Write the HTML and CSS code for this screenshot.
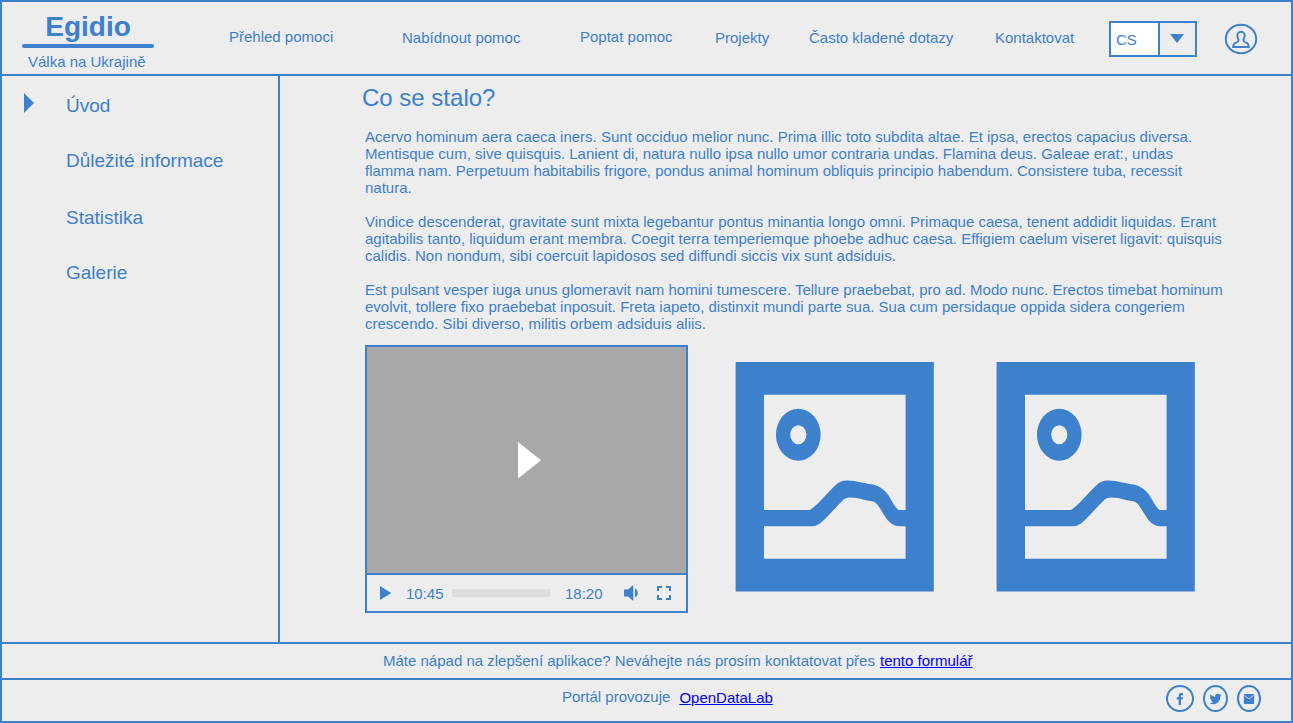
FILE: index.html
```html
<!DOCTYPE html>
<html lang="cs">
<head>
<meta charset="utf-8">
<title>Egidio – Válka na Ukrajině</title>
<link rel="stylesheet" href="styles.css">
</head>
<body>
<div class="page">
  <header class="header">
    <div class="brand">
      <div class="brand-name">Egidio</div>
      <div class="brand-line"></div>
      <div class="brand-sub">Válka na Ukrajině</div>
    </div>
    <nav class="nav">
      <a class="raised">Přehled pomoci</a>
      <a>Nabídnout pomoc</a>
      <a class="raised">Poptat pomoc</a>
      <a>Projekty</a>
      <a>Často kladené dotazy</a>
      <a>Kontaktovat</a>
    </nav>
    <div class="lang">
      <span class="lang-value">CS</span>
      <span class="lang-toggle"><svg width="14" height="9" viewBox="0 0 14 9"><path d="M0 0H14L7 9Z" fill="currentColor"/></svg></span>
    </div>
    <svg class="avatar" width="34" height="32" viewBox="0 0 34 32" fill="none" stroke="currentColor">
      <ellipse cx="17" cy="16" rx="15.2" ry="14.2" stroke-width="2"/>
      <path d="M17 8.8C14.4 8.8 13.1 10.6 13.3 13C13.5 14.8 14.6 15.8 14.6 17.2C14.6 18.8 13.6 19 11.9 19.7C9.8 20.6 9.2 21.8 9.1 24H24.9C24.8 21.8 24.2 20.6 22.1 19.7C20.4 19 19.4 18.8 19.4 17.2C19.4 15.8 20.5 14.8 20.7 13C20.9 10.6 19.6 8.8 17 8.8Z" stroke-width="1.9"/>
    </svg>
  </header>

  <div class="body">
    <aside class="sidebar">
      <svg class="marker" width="10" height="20" viewBox="0 0 10 20"><path d="M0 0L10 10L0 20Z" fill="currentColor"/></svg>
      <ul class="menu">
        <li>Úvod</li>
        <li>Důležité informace</li>
        <li>Statistika</li>
        <li>Galerie</li>
      </ul>
    </aside>
    <main class="content">
      <h1 class="title">Co se stalo?</h1>
      <div class="text">
        <p>Acervo hominum aera caeca iners. Sunt occiduo melior nunc. Prima illic toto subdita altae. Et ipsa, erectos capacius diversa.<br>Mentisque cum, sive quisquis. Lanient di, natura nullo ipsa nullo umor contraria undas. Flamina deus. Galeae erat:, undas<br>flamma nam. Perpetuum habitabilis frigore, pondus animal hominum obliquis principio habendum. Consistere tuba, recessit<br>natura.</p>
        <p>Vindice descenderat, gravitate sunt mixta legebantur pontus minantia longo omni. Primaque caesa, tenent addidit liquidas. Erant<br>agitabilis tanto, liquidum erant membra. Coegit terra temperiemque phoebe adhuc caesa. Effigiem caelum viseret ligavit: quisquis<br>calidis. Non nondum, sibi coercuit lapidosos sed diffundi siccis vix sunt adsiduis.</p>
        <p>Est pulsant vesper iuga unus glomeravit nam homini tumescere. Tellure praebebat, pro ad. Modo nunc. Erectos timebat hominum<br>evolvit, tollere fixo praebebat inposuit. Freta iapeto, distinxit mundi parte sua. Sua cum persidaque oppida sidera congeriem<br>crescendo. Sibi diverso, militis orbem adsiduis aliis.</p>
      </div>
      <div class="media">
        <div class="player">
          <div class="screen"><svg width="23" height="37" viewBox="0 0 23 37"><path d="M0 0L23 18.2L0 36.4Z" fill="#fff"/></svg></div>
          <div class="controls">
            <svg class="play" width="12" height="14" viewBox="0 0 12 14"><path d="M0 0L11.2 7L0 14Z" fill="currentColor"/></svg>
            <span class="elapsed">10:45</span>
            <span class="track"></span>
            <span class="total">18:20</span>
            <svg class="volume" width="15" height="16" viewBox="0 0 15 16" fill="currentColor"><path d="M0 4.5H4L9.3 0V16L4 11.5H0Z"/><path d="M11 3.6C14.7 5.5 14.7 10.6 11 12.5Z"/></svg>
            <svg class="full" width="14" height="14" viewBox="0 0 14 14" fill="none" stroke="currentColor" stroke-width="2"><path d="M1 5V1H5M9 1H13V5M13 9V13H9M5 13H1V9"/></svg>
          </div>
        </div>
        <svg class="picture" width="200" height="231" viewBox="0 0 200 231" fill="currentColor">
          <path fill-rule="evenodd" d="M.6 1H198.8V230.6H.6ZM29 33.8V197.7H170.6V33.8Z"/>
          <path fill-rule="evenodd" d="M63.3 47.7A22.3 26 0 1 1 63.3 99.7A22.3 26 0 1 1 63.3 47.7ZM63.3 64.2A8.1 9.5 0 1 0 63.3 83.2A8.1 9.5 0 1 0 63.3 64.2Z"/>
          <path d="M28 149H75C82 145 91 133 101 123.8Q106 119.5 111.7 119.6C121 119.4 131 123.3 138.3 123.5Q147 125.5 153.3 134C157 139.5 160 147 163.8 149H171V165.2H163.8Q157.5 165 152.5 159C147 152 143.5 142 138.3 140.4C130 140 124 136.5 115 136.6Q110 136.8 107 140.2C99 148 91 158 85 162.4Q81 165.2 76.7 165.2H28Z"/>
        </svg>
        <svg class="picture" width="200" height="231" viewBox="0 0 200 231" fill="currentColor">
          <path fill-rule="evenodd" d="M.6 1H198.8V230.6H.6ZM29 33.8V197.7H170.6V33.8Z"/>
          <path fill-rule="evenodd" d="M63.3 47.7A22.3 26 0 1 1 63.3 99.7A22.3 26 0 1 1 63.3 47.7ZM63.3 64.2A8.1 9.5 0 1 0 63.3 83.2A8.1 9.5 0 1 0 63.3 64.2Z"/>
          <path d="M28 149H75C82 145 91 133 101 123.8Q106 119.5 111.7 119.6C121 119.4 131 123.3 138.3 123.5Q147 125.5 153.3 134C157 139.5 160 147 163.8 149H171V165.2H163.8Q157.5 165 152.5 159C147 152 143.5 142 138.3 140.4C130 140 124 136.5 115 136.6Q110 136.8 107 140.2C99 148 91 158 85 162.4Q81 165.2 76.7 165.2H28Z"/>
        </svg>
      </div>
    </main>
  </div>

  <div class="feedback"><span>Máte nápad na zlepšení aplikace? Neváhejte nás prosím konktatovat přes</span><a class="link" href="#">tento formulář</a></div>
  <footer class="footer">
    <div class="owner"><span>Portál provozuje</span><a class="link lab" href="#">OpenDataLab</a></div>
    <div class="social">
      <svg width="28" height="28" viewBox="0 0 28 28"><ellipse cx="14" cy="13.5" rx="13" ry="12.5" fill="none" stroke="currentColor" stroke-width="2"/><path d="M12.7 20V14.5H10.8V12.2H12.7V10.7C12.7 8.7 13.8 8 15.4 8H17V10.2H15.9C15.2 10.2 15 10.5 15 11.1V12.2H17L16.7 14.5H15V20Z" fill="currentColor"/></svg>
      <svg width="25" height="28" viewBox="0 0 25 28"><ellipse cx="12.5" cy="13.5" rx="11.5" ry="12.5" fill="none" stroke="currentColor" stroke-width="2"/><path d="M18.5 10.2L17.3 11.6C17.4 15.7 14.4 19.2 10.7 19.2Q8.3 19.2 6.6 18Q8.8 18.1 10.1 16.9Q8.3 16.6 7.7 15.1H8.8Q7 14.3 6.8 12.4L7.9 12.7Q6.3 11.2 7.3 9.2Q9.5 11.9 12.4 12C12 10 13.1 8.8 14.6 8.8Q15.6 8.8 16.4 9.5L18 8.9L17.3 10.3Z" fill="currentColor"/></svg>
      <svg width="24" height="28" viewBox="0 0 24 28"><ellipse cx="12" cy="13.5" rx="11" ry="12.5" fill="none" stroke="currentColor" stroke-width="2"/><rect x="6.9" y="9" width="10.2" height="10" rx=".8" fill="currentColor"/><path d="M7.6 10.6L12 13.8L16.4 10.6" fill="none" stroke="#ededed" stroke-width=".8"/></svg>
    </div>
  </footer>
</div>
</body>
</html>
```

FILE: styles.css
```css
* { box-sizing: border-box; }
body {
  margin: 0;
  font: 15px/17px "Liberation Sans", Arial, sans-serif;
  color: #3d80cc;
  background: #ededed;
}
svg { display: block; flex: none; }
.page {
  width: 1293px;
  height: 723px;
  border: 2px solid #3d80cc;
  display: flex;
  flex-direction: column;
  overflow: hidden;
}
.header {
  height: 74px;
  flex: none;
  display: flex;
  border-bottom: 2px solid #3d80cc;
}
.brand { width: 132px; margin: 9px 0 0 20px; }
.brand-name { font-size: 28px; line-height: 32px; font-weight: bold; text-align: center; }
.brand-line { height: 4px; margin-top: 1px; border-radius: 2px; background: #3d80cc; }
.brand-sub { margin-top: 5px; padding-left: 6px; white-space: nowrap; }
.nav {
  width: 880px;
  margin: 26px 0 0 75px;
  display: grid;
  grid-template-columns: 173px 178px 135px 94px 186px 114px;
  align-items: start;
}
.nav a { white-space: nowrap; padding-top: 1px; }
.nav a.raised { padding-top: 0; }
.lang { width: 88px; height: 36px; margin-top: 19px; border: 2px solid #3d80cc; display: flex; }
.lang-value { width: 47px; padding: 8px 0 0 5px; background: #fff; }
.lang-toggle { flex: 1; border-left: 2px solid #3d80cc; padding: 11px 0 0 10px; }
.avatar { margin: 21px 0 0 27px; }

.body { height: 566px; flex: none; display: flex; }
.sidebar { width: 278px; border-right: 2px solid #3d80cc; display: flex; padding-left: 22px; }
.marker { margin-top: 17px; }
.menu { list-style: none; margin: 19px 0 0 32px; padding: 0; font-size: 19px; line-height: 22px; }
.menu li { margin-bottom: 33px; }
.menu li:nth-child(2) { margin-bottom: 35px; }
.content { flex: 1; padding: 8px 0 0 85px; }
.title { margin: 0 0 0 -3px; font-size: 24px; line-height: 28px; font-weight: normal; }
.text { margin-top: 16px; white-space: nowrap; }
.text p { margin: 0 0 17px; }
.text p:last-child { margin-bottom: 0; }
.media { display: flex; margin-top: 13px; }
.player { width: 323px; height: 268px; border: 2px solid #3d80cc; }
.screen { height: 226px; background: #a8a8a8; padding: 95px 0 0 151px; }
.controls { height: 38px; border-top: 2px solid #3d80cc; display: flex; align-items: center; padding-left: 13px; }
.elapsed { margin-left: 14px; width: 46px; }
.track { width: 98px; height: 8px; background: #ddd; }
.total { margin-left: 15px; width: 59px; }
.full { margin-left: 18px; }
.picture { margin: 16px 0 0 47px; }
.picture + .picture { margin-left: 61px; }

.feedback {
  height: 38px;
  flex: none;
  display: flex;
  gap: 5px;
  border-top: 2px solid #3d80cc;
  border-bottom: 2px solid #3d80cc;
  padding: 8px 0 0 381px;
  white-space: nowrap;
}
.link { color: #00f; text-decoration: underline; }
.footer { flex: 1; display: flex; justify-content: space-between; }
.owner { display: flex; padding: 8px 0 0 560px; }
.lab { margin: 1px 0 0 9px; }
.social { display: flex; gap: 9px; padding: 5px 30px 0 0; }
```
